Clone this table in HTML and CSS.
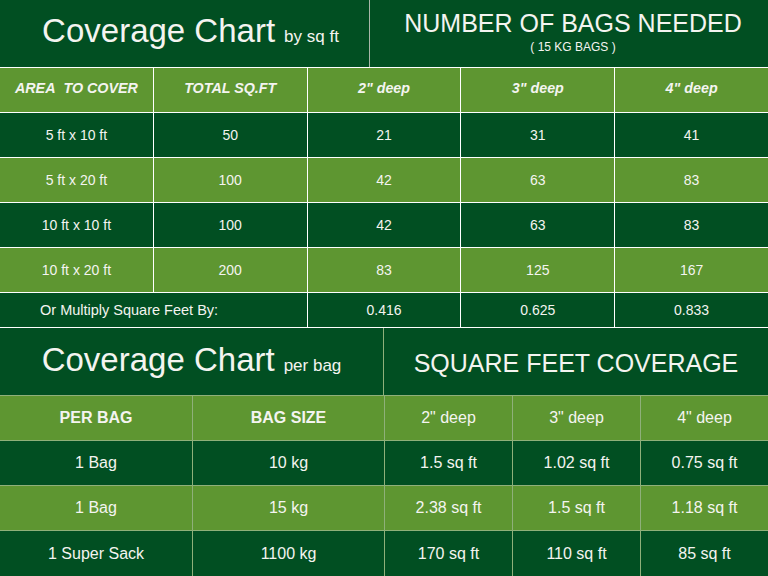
FILE: index.html
```html
<!DOCTYPE html>
<html>
<head>
<meta charset="utf-8">
<link rel="stylesheet" href="styles.css">
</head>
<body>
<div class="page">
  <section class="sec top">
    <div class="head">
      <div class="title"><span class="big">Coverage Chart</span> <span class="small">by sq ft</span></div>
      <div class="sub">
        <div class="caps">NUMBER OF BAGS NEEDED</div>
        <div class="note">( 15 KG BAGS )</div>
      </div>
    </div>
    <div class="grid g5">
      <div class="c th">AREA&nbsp; TO COVER</div><div class="c th">TOTAL SQ.FT</div><div class="c th">2" deep</div><div class="c th">3" deep</div><div class="c th">4" deep</div>
      <div class="c d">5 ft x 10 ft</div><div class="c d">50</div><div class="c d">21</div><div class="c d">31</div><div class="c d">41</div>
      <div class="c l">5 ft x 20 ft</div><div class="c l">100</div><div class="c l">42</div><div class="c l">63</div><div class="c l">83</div>
      <div class="c d">10 ft x 10 ft</div><div class="c d">100</div><div class="c d">42</div><div class="c d">63</div><div class="c d">83</div>
      <div class="c l">10 ft x 20 ft</div><div class="c l">200</div><div class="c l">83</div><div class="c l">125</div><div class="c l">167</div>
      <div class="c d short span2 left">Or Multiply Square Feet By:</div><div class="c d short">0.416</div><div class="c d short">0.625</div><div class="c d short">0.833</div>
    </div>
  </section>
  <section class="sec bottom">
    <div class="head head2">
      <div class="title"><span class="big">Coverage Chart</span> <span class="small">per bag</span></div>
      <div class="sub"><div class="caps">SQUARE FEET COVERAGE</div></div>
    </div>
    <div class="grid g2">
      <div class="c th2">PER BAG</div><div class="c th2">BAG SIZE</div><div class="c th3">2" deep</div><div class="c th3">3" deep</div><div class="c th3">4" deep</div>
      <div class="c d">1 Bag</div><div class="c d">10 kg</div><div class="c d">1.5 sq ft</div><div class="c d">1.02 sq ft</div><div class="c d">0.75 sq ft</div>
      <div class="c l">1 Bag</div><div class="c l">15 kg</div><div class="c l">2.38 sq ft</div><div class="c l">1.5 sq ft</div><div class="c l">1.18 sq ft</div>
      <div class="c d last">1 Super Sack</div><div class="c d last">1100 kg</div><div class="c d last">170 sq ft</div><div class="c d last">110 sq ft</div><div class="c d last">85 sq ft</div>
    </div>
  </section>
</div>
</body>
</html>
```
FILE: styles.css
```css
html, body { margin: 0; padding: 0; }
body { width: 768px; height: 576px; overflow: hidden; background: #014f22; font-family: "Liberation Sans", Arial, sans-serif; color: #f4f4f0; }
.page { display: flex; flex-direction: column; width: 768px; height: 576px; }
.sec { display: flex; flex-direction: column; }
.head { display: grid; grid-template-columns: 370px 1fr; height: 67px; background: #014f22; border-bottom: 1px solid #ffffff; }
.head2 { grid-template-columns: 384px 1fr; border-bottom: 1px solid #8fb07a; }
.title { display: flex; align-items: baseline; justify-content: center; padding-top: 12px; padding-left: 12px; border-right: 1px solid #a9b7a9; }
.head2 .title { border-right: 1px solid #8fb07a; padding-top: 13px; padding-left: 0; }
.big { font-size: 33px; }
.small { font-size: 17px; margin-left: 9px; }
.sub { display: flex; flex-direction: column; align-items: center; padding-top: 8px; padding-left: 8px; }
.caps { font-size: 25px; line-height: 30px; }
.head2 .caps { padding-top: 12px; }
.head2 .sub { padding-left: 0; }
.note { font-size: 12px; line-height: 14px; margin-top: 2px; }
.grid { display: grid; grid-template-columns: repeat(5, 1fr); gap: 1px; background: #ffffff; }
.g5 { grid-template-rows: 44px 44px 44px 44px 44px 34px; border-bottom: 1px solid #ffffff; }
.g2 { grid-template-columns: 192px 191px 127px 127px 1fr; grid-template-rows: 44px 44px 44px 45px; background: #8fb07a; }
.c { display: flex; align-items: center; justify-content: center; font-size: 14px; }
.span2 { grid-column: span 2; }
.left { justify-content: flex-start; padding-left: 40px; font-size: 14.5px; }
.d { background: #014f22; }
.l { background: #5e9631; }
.th { background: #5e9631; font-weight: bold; font-style: italic; font-size: 14.3px; padding-bottom: 4px; }
.th2 { background: #5e9631; font-weight: bold; font-size: 16px; }
.th3 { background: #5e9631; font-size: 16px; }
.g2 .d, .g2 .l { font-size: 16px; }
```
